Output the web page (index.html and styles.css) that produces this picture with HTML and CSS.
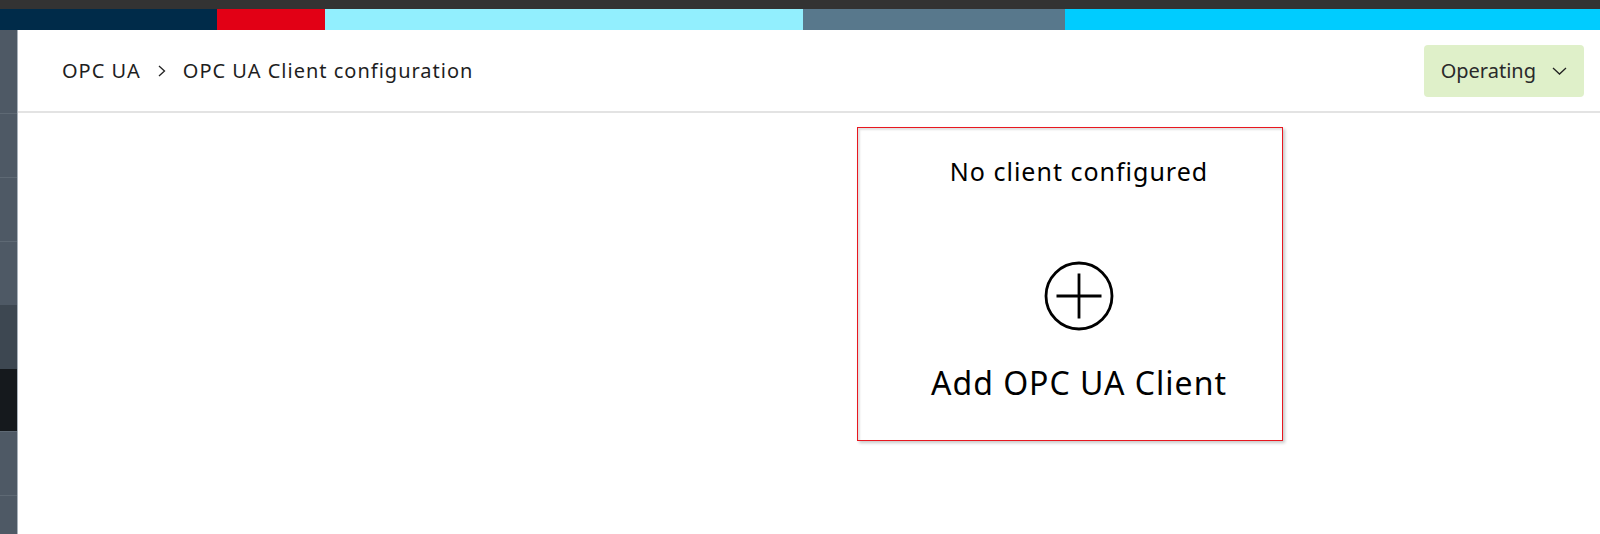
FILE: index.html
```html
<!DOCTYPE html>
<html lang="en">
<head>
    <meta charset="UTF-8">
    <meta name="viewport" content="width=device-width, initial-scale=1.0">
    <title>OPC UA Client configuration</title>
    <link rel="stylesheet" href="styles.css">
</head>
<body>
    <div class="topbar"></div>
    <div class="stripe">
        <span class="stripe-navy"></span>
        <span class="stripe-red"></span>
        <span class="stripe-sky"></span>
        <span class="stripe-slate"></span>
        <span class="stripe-cyan"></span>
    </div>
    <div class="layout">
        <nav class="sidebar">
            <div class="side-item first"></div>
            <div class="side-item"></div>
            <div class="side-item"></div>
            <div class="side-item"></div>
            <div class="side-item dim"></div>
            <div class="side-item active"></div>
            <div class="side-item"></div>
            <div class="side-item last"></div>
        </nav>
        <div class="page">
            <header class="page-header">
                <div class="breadcrumb">
                    <span>OPC UA</span>
                    <svg class="crumb-sep" width="8" height="12" viewBox="0 0 8 12">
                        <path d="M1 1 L6.5 6 L1 11" fill="none" stroke="#222" stroke-width="1.3"/>
                    </svg>
                    <span>OPC UA Client configuration</span>
                </div>
                <button type="button" class="state-button">
                    Operating
                    <svg width="15" height="8" viewBox="0 0 15 8">
                        <path d="M1 1 L7.5 7 L14 1" fill="none" stroke="#222" stroke-width="1.3"/>
                    </svg>
                </button>
            </header>
            <main class="content">
                <div class="client-card">
                    <p class="card-title">No client configured</p>
                    <svg class="add-icon" width="72" height="72" viewBox="0 0 72 72">
                        <circle cx="36" cy="36" r="33" fill="none" stroke="#000" stroke-width="2.8"/>
                        <path d="M13.5 36 H58.5 M36 13.5 V58.5" fill="none" stroke="#000" stroke-width="2.8"/>
                    </svg>
                    <p class="card-action">Add OPC UA Client</p>
                </div>
            </main>
        </div>
    </div>
</body>
</html>
```

FILE: styles.css
```css
body {
    font-family: "Noto Sans", "Open Sans", sans-serif;
    background-color: #ffffff;
    color: #1a1a1a;
    margin: 0;
    padding: 0;
    width: 1600px;
    height: 534px;
    overflow: hidden;
}
.topbar {
    height: 9px;
    background-color: #333333;
}
.stripe {
    display: flex;
    height: 21px;
}
.stripe span {
    display: block;
}
.stripe-navy {
    width: 217px;
    background-color: #002b49;
}
.stripe-red {
    width: 108px;
    background-color: #e20015;
}
.stripe-sky {
    width: 478px;
    background-color: #92effe;
}
.stripe-slate {
    width: 262px;
    background-color: #58788c;
}
.stripe-cyan {
    flex: 1;
    background-color: #00ccff;
}
.layout {
    display: flex;
    height: 504px;
}
.sidebar {
    width: 17px;
    background-color: #4e5965;
    border-right: 1px solid #a9b2bb;
    display: flex;
    flex-direction: column;
}
.side-item {
    flex-shrink: 0;
    height: 63px;
    border-top: 1px solid #5e6974;
}
.side-item.first {
    height: 83px;
    border-top: none;
}
.side-item.dim {
    height: 63px;
    background-color: #3d4751;
    border-top-color: #3d4751;
}
.side-item.active {
    height: 62px;
    background-color: #15191d;
    border-top: none;
}
.side-item.last {
    flex: 1;
}
.page {
    flex: 1;
    display: flex;
    flex-direction: column;
}
.page-header {
    height: 81px;
    border-bottom: 2px solid #e3e3e3;
    display: flex;
    align-items: center;
    justify-content: space-between;
    padding: 0 16px 0 44px;
}
.breadcrumb {
    display: flex;
    align-items: center;
    gap: 17px;
    font-size: 20px;
    letter-spacing: 1px;
    color: #1e1e1e;
}
.state-button {
    display: flex;
    align-items: center;
    gap: 16px;
    height: 52px;
    padding: 0 17px 0 17px;
    border: none;
    border-radius: 4px;
    background-color: #dff0c9;
    color: #2a2a2a;
    font-family: inherit;
    font-size: 20px;
    cursor: pointer;
}
.content {
    flex: 1;
    padding: 14px 0 0 839px;
}
.client-card {
    width: 406px;
    height: 312px;
    padding-left: 18px;
    border: 1px solid #e8171f;
    box-shadow: 2px 2px 3px rgba(0, 0, 0, 0.22), inset 2px 2px 2px rgba(0, 0, 0, 0.12);
    display: flex;
    flex-direction: column;
    align-items: center;
}
.card-title {
    margin: 26px 0 0;
    font-size: 25px;
    letter-spacing: 1px;
    color: #000000;
}
.add-icon {
    margin-top: 72px;
}
.card-action {
    margin: 29px 0 0;
    font-size: 32px;
    letter-spacing: 1px;
    color: #000000;
}
```
